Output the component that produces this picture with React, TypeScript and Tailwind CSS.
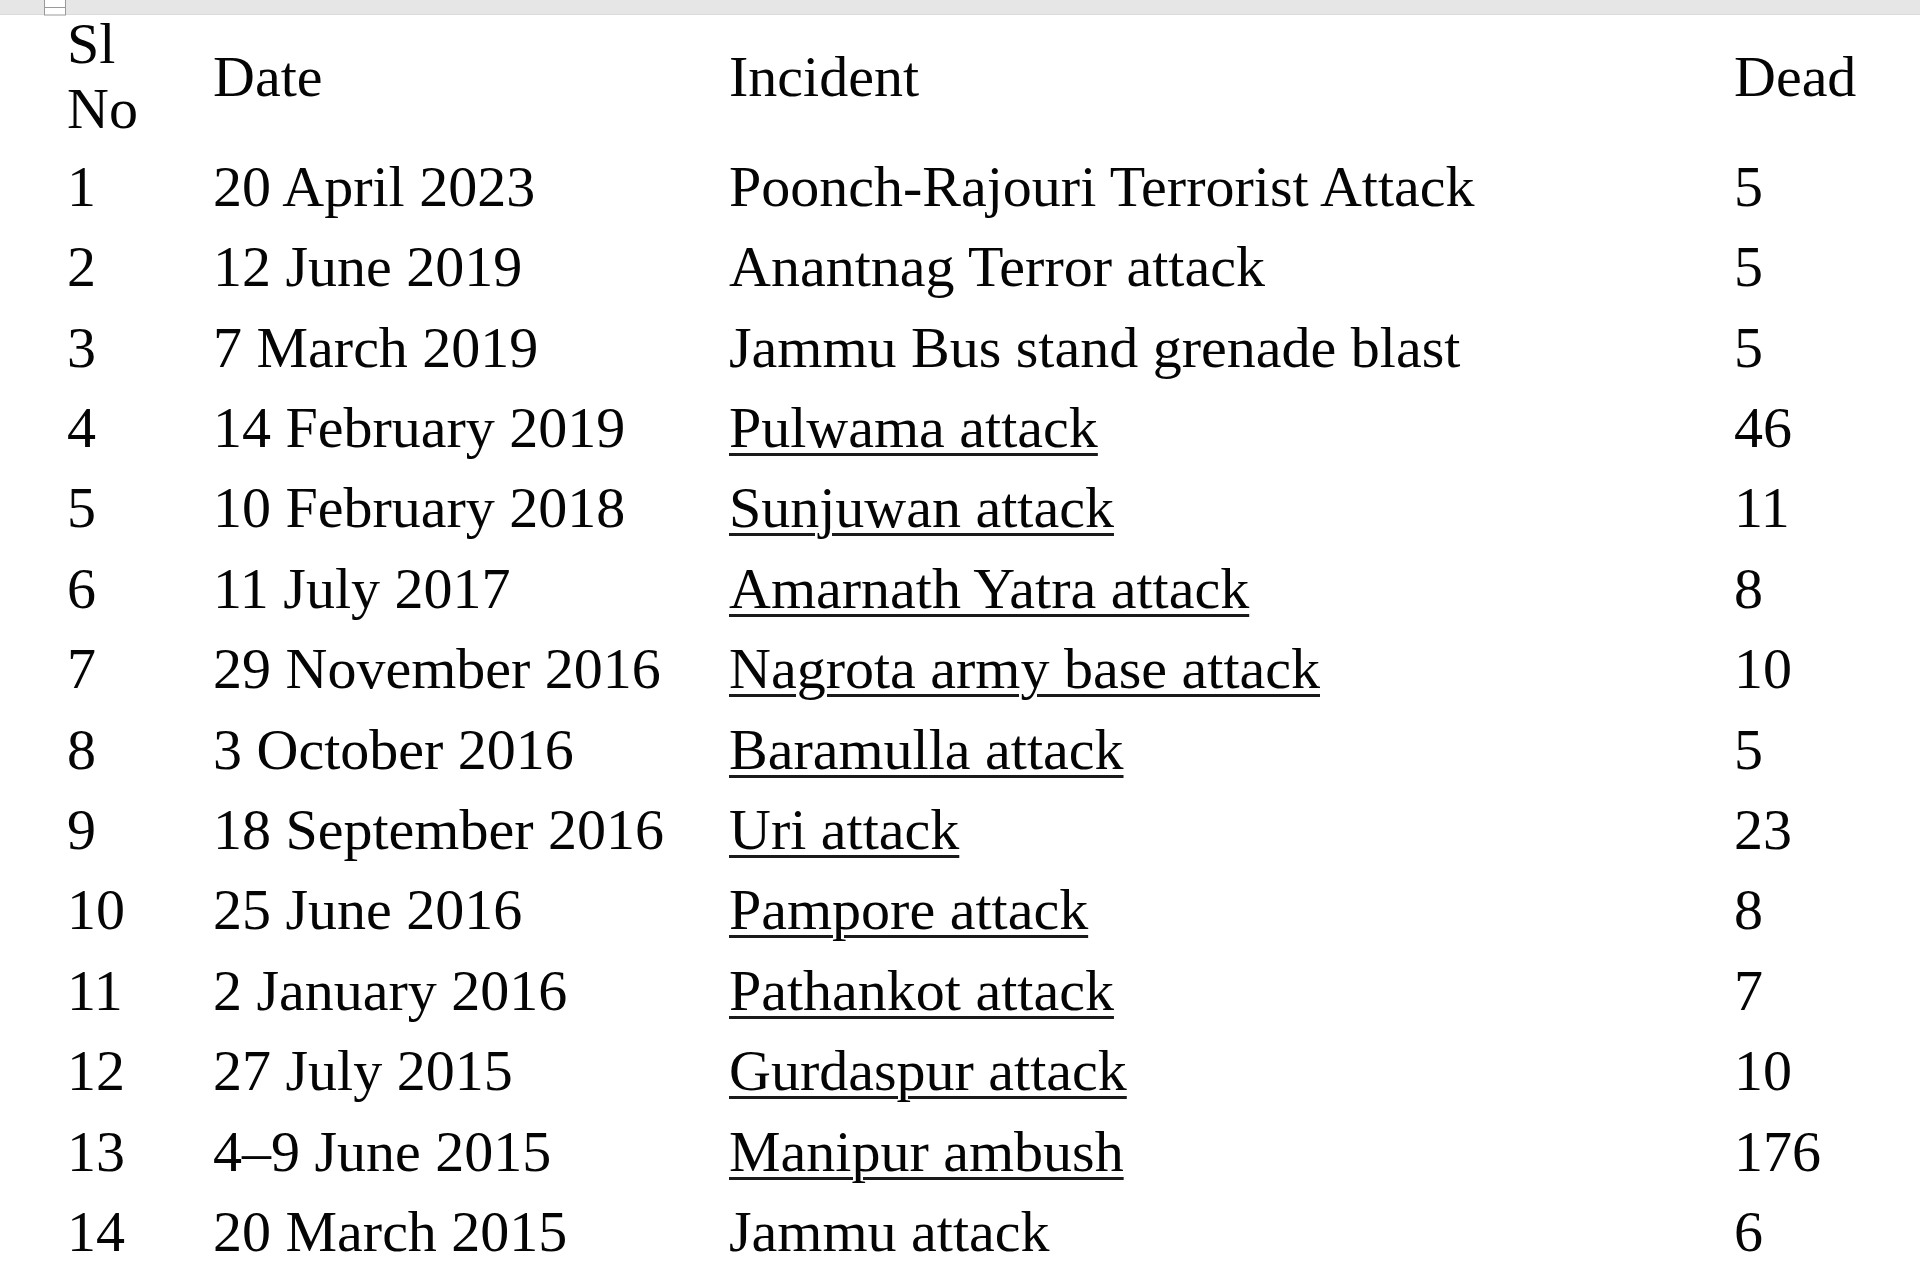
import React from "react";

type Row = { n: string; date: string; incident: string; dead: string; link?: boolean };

const rows: Row[] = [
  { n: "1", date: "20 April 2023", incident: "Poonch-Rajouri Terrorist Attack", dead: "5" },
  { n: "2", date: "12 June 2019", incident: "Anantnag Terror attack", dead: "5" },
  { n: "3", date: "7 March 2019", incident: "Jammu Bus stand grenade blast", dead: "5" },
  { n: "4", date: "14 February 2019", incident: "Pulwama attack", dead: "46", link: true },
  { n: "5", date: "10 February 2018", incident: "Sunjuwan attack", dead: "11", link: true },
  { n: "6", date: "11 July 2017", incident: "Amarnath Yatra attack", dead: "8", link: true },
  { n: "7", date: "29 November 2016", incident: "Nagrota army base attack", dead: "10", link: true },
  { n: "8", date: "3 October 2016", incident: "Baramulla attack", dead: "5", link: true },
  { n: "9", date: "18 September 2016", incident: "Uri attack", dead: "23", link: true },
  { n: "10", date: "25 June 2016", incident: "Pampore attack", dead: "8", link: true },
  { n: "11", date: "2 January 2016", incident: "Pathankot attack", dead: "7", link: true },
  { n: "12", date: "27 July 2015", incident: "Gurdaspur attack", dead: "10", link: true },
  { n: "13", date: "4–9 June 2015", incident: "Manipur ambush", dead: "176", link: true },
  { n: "14", date: "20 March 2015", incident: "Jammu attack", dead: "6" },
];

export default function App() {
  return (
    <div
      className="relative w-[1920px] h-[1280px] bg-white text-[#050505] overflow-hidden"
      style={{ fontFamily: '"Liberation Serif", "Times New Roman", serif' }}
    >
      <div className="relative h-[15px] bg-[#e6e6e6] border-b border-[#dadada]">
        <svg
          className="absolute left-[44px] top-0"
          width="23"
          height="16"
          viewBox="0 0 23 16"
        >
          <rect x="0.5" y="-2" width="21" height="17" fill="#ffffff" stroke="#9a9a9a" strokeWidth="1" />
          <line x1="1" y1="7.5" x2="21" y2="7.5" stroke="#9a9a9a" strokeWidth="1" />
        </svg>
      </div>
      <div className="-mt-[4px] text-[58px] leading-[65.4px]">
        <div className="flex items-center">
          <div className="w-[146px] pl-[67px] box-content">
            Sl
            <br />
            No
          </div>
          <div className="w-[516px]">Date</div>
          <div className="w-[1005px]">Incident</div>
          <div className="flex-1">Dead</div>
        </div>
        {rows.map((r) => (
          <div key={r.n} className="flex pt-[12px] pb-[3px]">
            <div className="w-[146px] pl-[67px] box-content whitespace-nowrap">{r.n}</div>
            <div className="w-[516px] whitespace-nowrap">{r.date}</div>
            <div className="w-[1005px] whitespace-nowrap">
              {r.link ? (
                <span className="underline decoration-[2.5px] underline-offset-[6px] decoration-[#1a1a1a]">
                  {r.incident}
                </span>
              ) : (
                r.incident
              )}
            </div>
            <div className="flex-1 whitespace-nowrap">{r.dead}</div>
          </div>
        ))}
      </div>
    </div>
  );
}
